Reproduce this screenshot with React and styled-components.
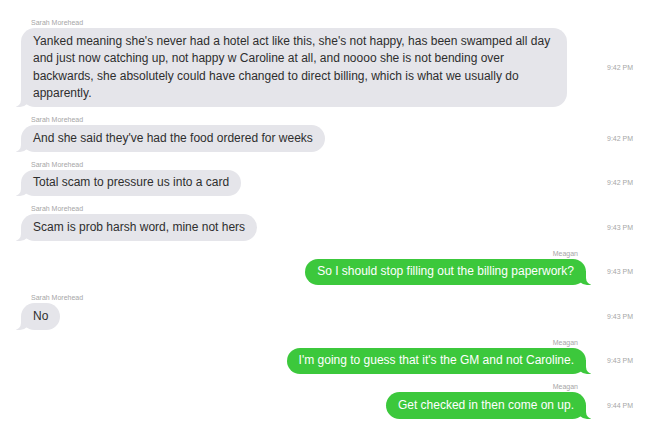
import styled, { createGlobalStyle } from "styled-components";

const GlobalStyle = createGlobalStyle`
  html, body {
    margin: 0;
    padding: 0;
    background: #ffffff;
  }
  body {
    font-family: "Liberation Sans", Arial, sans-serif;
  }
`;

const messages = [
  { from: "Sarah Morehead", text: "Yanked meaning she's never had a hotel act like this, she's not happy, has been swamped all day and just now catching up, not happy w Caroline at all, and noooo she is not bending over backwards, she absolutely could have changed to direct billing, which is what we usually do apparently.", time: "9:42 PM" },
  { from: "Sarah Morehead", text: "And she said they've had the food ordered for weeks", time: "9:42 PM" },
  { from: "Sarah Morehead", text: "Total scam to pressure us into a card", time: "9:42 PM" },
  { from: "Sarah Morehead", text: "Scam is prob harsh word, mine not hers", time: "9:43 PM" },
  { from: "Meagan", mine: true, text: "So I should stop filling out the billing paperwork?", time: "9:43 PM" },
  { from: "Sarah Morehead", text: "No", time: "9:43 PM" },
  { from: "Meagan", mine: true, text: "I'm going to guess that it's the GM and not Caroline.", time: "9:43 PM" },
  { from: "Meagan", mine: true, text: "Get checked in then come on up.", time: "9:44 PM" },
];

export default function App() {
  return (
    <>
      <GlobalStyle />
      <Thread>
        {messages.map((m, i) => (
          <Group key={i}>
            <Sender $mine={m.mine}>{m.from}</Sender>
            <Line>
              <Side $mine={m.mine}>
                <Bubble $mine={m.mine}>{m.text}</Bubble>
              </Side>
              <Time>{m.time}</Time>
            </Line>
          </Group>
        ))}
      </Thread>
    </>
  );
}

const Thread = styled.div`
  width: 656px;
  height: 436px;
  box-sizing: border-box;
  padding: 18px 0 0 21px;
  display: flex;
  flex-direction: column;
  gap: 8px;
  overflow: hidden;
`;

const Group = styled.div`
  display: flex;
  flex-direction: column;
`;

const Sender = styled.div`
  width: 567px;
  box-sizing: border-box;
  font-size: 7px;
  line-height: 10px;
  height: 10px;
  color: #a6a6a6;
  text-align: ${(p) => (p.$mine ? "right" : "left")};
  padding: ${(p) => (p.$mine ? "0 10px 0 0" : "0 0 0 10px")};
`;

const Line = styled.div`
  display: flex;
  align-items: center;
`;

const Side = styled.div`
  width: 567px;
  display: flex;
  justify-content: ${(p) => (p.$mine ? "flex-end" : "flex-start")};
  padding-right: ${(p) => (p.$mine ? "2px" : "0")};
  box-sizing: border-box;
`;

const Bubble = styled.div`
  position: relative;
  max-width: 522px;
  padding: 4.5px 12px;
  border-radius: 14px;
  font-size: 12px;
  line-height: 17.5px;
  background: ${(p) => (p.$mine ? "#3cc83c" : "#e5e5ea")};
  color: ${(p) => (p.$mine ? "#ffffff" : "#2e2e2e")};

  &::before {
    content: "";
    position: absolute;
    bottom: 0;
    ${(p) => (p.$mine ? "right: -5px;" : "left: -5px;")}
    width: 14px;
    height: 14px;
    background: ${(p) => (p.$mine ? "#3cc83c" : "#e5e5ea")};
    ${(p) =>
      p.$mine
        ? "border-bottom-left-radius: 10px;"
        : "border-bottom-right-radius: 10px;"}
  }

  &::after {
    content: "";
    position: absolute;
    bottom: 0;
    ${(p) => (p.$mine ? "right: -7px;" : "left: -7px;")}
    width: 7px;
    height: 14px;
    background: #ffffff;
    ${(p) =>
      p.$mine
        ? "border-bottom-left-radius: 7px;"
        : "border-bottom-right-radius: 7px;"}
  }
`;

const Time = styled.div`
  margin-left: 19px;
  font-size: 7px;
  color: #a6a6a6;
  white-space: nowrap;
`;
